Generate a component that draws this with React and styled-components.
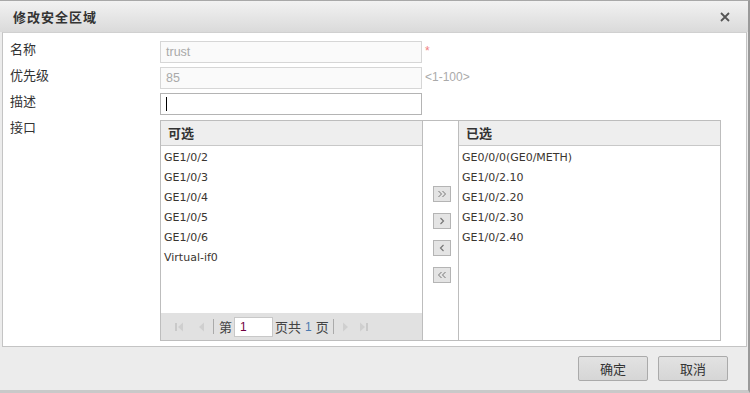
import React from "react";
import styled, { createGlobalStyle } from "styled-components";

const GlobalStyle = createGlobalStyle`
  html, body { margin: 0; padding: 0; background: #fff; }
  body { font-family: "Noto Sans CJK SC", "Liberation Sans", sans-serif; }
`;

const Dialog = styled.div`
  width: 750px;
  height: 393px;
  box-sizing: border-box;
  display: flex;
  flex-direction: column;
  background: #ececec;
  border-top: 1px solid #a8a8a8;
  border-right: 2px solid #9a9a9a;
  border-bottom: 3px solid #c9c9c9;
  overflow: hidden;
`;

const TitleBar = styled.div`
  height: 31px;
  flex: none;
  display: flex;
  align-items: center;
  justify-content: space-between;
  padding: 0 18px 0 13px;
  background: linear-gradient(#f2f2f2, #dadada);
  h1 {
    margin: 0;
    font-size: 13px;
    font-weight: bold;
    letter-spacing: 1px;
    color: #333;
  }
`;

const Close = styled.svg`
  width: 10px;
  height: 10px;
`;

const Body = styled.div`
  height: 315px;
  flex: none;
  margin: 0 1px 0 2px;
  box-sizing: border-box;
  background: #fff;
  border: 1px solid #c4c4c4;
  border-top-color: #d0d0d0;
  display: grid;
  grid-template-columns: 150px 1fr;
  grid-template-rows: 23px 26px 26px auto;
  padding: 8px 0 0 7px;
`;

const Label = styled.div`
  font-size: 13px;
  color: #333;
  line-height: 16px;
  padding-top: ${p => p.$top || 0}px;
`;

const FieldRow = styled.div`
  display: flex;
  align-items: flex-start;
  gap: 3px;
  padding-top: ${p => p.$top || 0}px;
`;

const Input = styled.div`
  width: 262px;
  height: 22px;
  box-sizing: border-box;
  border: 1px solid ${p => (p.$disabled ? "#d6d6d6" : "#b4b4b4")};
  background: ${p => (p.$disabled ? "#fafafa" : "#fff")};
  color: #a9a9a9;
  font-family: "Liberation Sans", sans-serif;
  font-size: 12.5px;
  line-height: 20px;
  padding-left: 5px;
  display: flex;
  align-items: center;
`;

const Caret = styled.span`
  width: 1px;
  height: 14px;
  background: #000;
`;

const Hint = styled.span`
  font-family: "Liberation Sans", sans-serif;
  font-size: 12px;
  color: ${p => (p.$red ? "#f08080" : "#aaa")};
  line-height: ${p => (p.$red ? "16px" : "20px")};
  padding-top: ${p => (p.$red ? 2 : 0)}px;
`;

const Shuttle = styled.div`
  margin-top: 4px;
  width: 561px;
  height: 221px;
  box-sizing: border-box;
  border: 1px solid #bdbdbd;
  display: grid;
  grid-template-columns: 261px 36px 1fr;
`;

const ListPane = styled.div`
  display: flex;
  flex-direction: column;
  min-height: 0;
  border-left: ${p => (p.$right ? "1px solid #bdbdbd" : "none")};
`;

const ListHead = styled.div`
  height: 25px;
  flex: none;
  box-sizing: border-box;
  background: #eeeeee;
  border-bottom: 1px solid #c8c8c8;
  font-size: 13px;
  font-weight: bold;
  color: #333;
  padding-left: 7px;
  line-height: 24px;
`;

const Items = styled.ul`
  list-style: none;
  margin: 0;
  padding: 2px 0 0 3px;
  flex: 1;
`;

const Item = styled.li`
  height: 20px;
  line-height: 20px;
  font-family: "DejaVu Sans", sans-serif;
  font-size: 11px;
  color: #3a3530;
`;

const Middle = styled.div`
  border-left: 1px solid #bdbdbd;
  display: flex;
  flex-direction: column;
  align-items: center;
  padding-top: 65px;
  gap: 11px;
`;

const MoveBtn = styled.div`
  width: 18px;
  height: 16px;
  box-sizing: border-box;
  border: 1px solid #b4b4b4;
  background: #e4e4e4;
  display: flex;
  align-items: center;
  justify-content: center;
  margin-left: 2px;
  svg { width: 10px; height: 8px; }
`;

const Pager = styled.div`
  height: 27px;
  flex: none;
  background: #e1e1e1;
  display: flex;
  align-items: center;
  padding-left: 13px;
  font-size: 13px;
  color: #444;
`;

const PageIcon = styled.svg`
  width: 12px;
  height: 12px;
  margin-right: ${p => p.$mr || 0}px;
`;

const Sep = styled.span`
  width: 1px;
  height: 15px;
  background: #aaa;
  margin: 0 ${p => p.$mr || 4}px 0 ${p => p.$ml || 0}px;
`;

const PageInput = styled.div`
  width: 39px;
  height: 20px;
  box-sizing: border-box;
  background: #fff;
  border: 1px solid #c8c8c8;
  margin: 0 2px;
  font-family: "Liberation Sans", sans-serif;
  font-size: 12px;
  color: #700040;
  padding-left: 5px;
  line-height: 18px;
`;

const Num = styled.span`
  font-family: "Liberation Sans", sans-serif;
  font-size: 12px;
  color: #4a7ab0;
  margin: 0 4px;
`;

const Footer = styled.div`
  flex: 1;
  display: flex;
  justify-content: flex-end;
  align-items: flex-start;
  gap: 10px;
  padding: 9px 20px 0 0;
`;

const Button = styled.button`
  width: 70px;
  height: 25px;
  border: 1px solid #aaaaaa;
  border-radius: 2px;
  background: linear-gradient(#e2e2e2, #d6d6d6);
  font-family: "Noto Sans CJK SC", sans-serif;
  font-size: 13px;
  color: #333;
  padding: 0;
`;

const Arrow = ({ dir, double }) => {
  const l = dir === "left";
  const one = x => (l ? `M${x + 3} 1 L${x} 4 L${x + 3} 7` : `M${x} 1 L${x + 3} 4 L${x} 7`);
  return (
    <svg viewBox="0 0 10 8">
      {double ? (
        <>
          <path d={one(1.5)} fill="none" stroke="#777" strokeWidth="1" />
          <path d={one(5.5)} fill="none" stroke="#777" strokeWidth="1" />
        </>
      ) : (
        <path d={one(3.5)} fill="none" stroke="#777" strokeWidth="1.2" />
      )}
    </svg>
  );
};

const PagerTri = ({ dir, bar, mr }) => {
  const l = dir === "left";
  return (
    <PageIcon viewBox="0 0 12 12" $mr={mr}>
      {l ? (
        <>
          {bar && <rect x="1" y="2" width="2" height="8" fill="#c9c9c9" />}
          <path d="M9 1.5 L4 6 L9 10.5 Z" fill="#cfcfcf" />
        </>
      ) : (
        <>
          <path d="M3 1.5 L8 6 L3 10.5 Z" fill="#cfcfcf" />
          {bar && <rect x="9" y="2" width="2" height="8" fill="#c9c9c9" />}
        </>
      )}
    </PageIcon>
  );
};

const available = ["GE1/0/2", "GE1/0/3", "GE1/0/4", "GE1/0/5", "GE1/0/6", "Virtual-if0"];
const selected = ["GE0/0/0(GE0/METH)", "GE1/0/2.10", "GE1/0/2.20", "GE1/0/2.30", "GE1/0/2.40"];

export default function App() {
  return (
    <>
      <GlobalStyle />
      <Dialog>
        <TitleBar>
          <h1>修改安全区域</h1>
          <Close viewBox="0 0 10 10">
            <path d="M1 1 L9 9 M9 1 L1 9" stroke="#555" strokeWidth="1.8" />
          </Close>
        </TitleBar>
        <Body>
          <Label>名称</Label>
          <FieldRow>
            <Input $disabled>trust</Input>
            <Hint $red>*</Hint>
          </FieldRow>
          <Label $top={3}>优先级</Label>
          <FieldRow $top={3}>
            <Input $disabled>85</Input>
            <Hint>&lt;1-100&gt;</Hint>
          </FieldRow>
          <Label $top={3}>描述</Label>
          <FieldRow $top={3}>
            <Input>
              <Caret />
            </Input>
          </FieldRow>
          <Label $top={3}>接口</Label>
          <Shuttle>
            <ListPane>
              <ListHead>可选</ListHead>
              <Items>
                {available.map(x => (
                  <Item key={x}>{x}</Item>
                ))}
              </Items>
              <Pager>
                <PagerTri dir="left" bar mr={9} />
                <PagerTri dir="left" mr={6} />
                <Sep $mr={5} />
                第
                <PageInput>1</PageInput>
                页共<Num>1</Num>页
                <Sep $ml={4} $mr={6} />
                <PagerTri dir="right" mr={5} />
                <PagerTri dir="right" bar />
              </Pager>
            </ListPane>
            <Middle>
              <MoveBtn><Arrow dir="right" double /></MoveBtn>
              <MoveBtn><Arrow dir="right" /></MoveBtn>
              <MoveBtn><Arrow dir="left" /></MoveBtn>
              <MoveBtn><Arrow dir="left" double /></MoveBtn>
            </Middle>
            <ListPane $right>
              <ListHead>已选</ListHead>
              <Items>
                {selected.map(x => (
                  <Item key={x}>{x}</Item>
                ))}
              </Items>
            </ListPane>
          </Shuttle>
        </Body>
        <Footer>
          <Button>确定</Button>
          <Button>取消</Button>
        </Footer>
      </Dialog>
    </>
  );
}
